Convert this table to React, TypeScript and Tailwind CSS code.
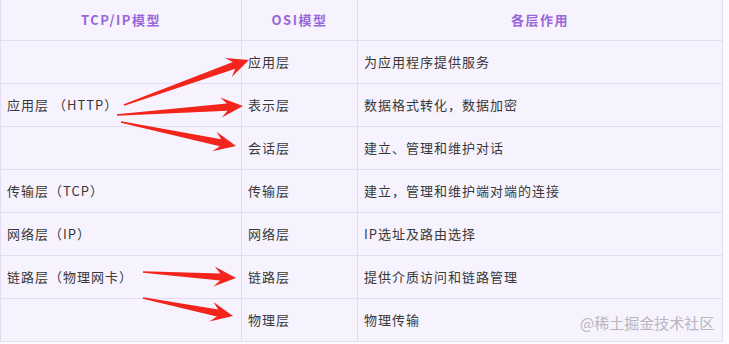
import React from "react";

const rows: [string, string, string][] = [
  ["", "应用层", "为应用程序提供服务"],
  ["应用层 （HTTP）", "表示层", "数据格式转化，数据加密"],
  ["", "会话层", "建立、管理和维护对话"],
  ["传输层（TCP）", "传输层", "建立，管理和维护端对端的连接"],
  ["网络层（IP）", "网络层", "IP选址及路由选择"],
  ["链路层（物理网卡）", "链路层", "提供介质访问和链路管理"],
  ["", "物理层", "物理传输"],
];

function arrow(tx: number, ty: number, px: number, py: number, L = 22, W = 10, sw = 3.6, tw = 0.8) {
  const dx = px - tx, dy = py - ty;
  const len = Math.hypot(dx, dy);
  const ux = dx / len, uy = dy / len;
  const nx = -uy, ny = ux;
  const bx = px - ux * L, by = py - uy * L;
  const ix = px - ux * (L * 0.72), iy = py - uy * (L * 0.72);
  const pts = [
    [tx + nx * tw, ty + ny * tw],
    [ix + nx * sw, iy + ny * sw],
    [bx + nx * W, by + ny * W],
    [px, py],
    [bx - nx * W, by - ny * W],
    [ix - nx * sw, iy - ny * sw],
    [tx - nx * tw, ty - ny * tw],
  ];
  return pts.map((p) => p.map((v) => v.toFixed(1)).join(",")).join(" ");
}

export default function App() {
  return (
    <div className="w-[729px] h-[344px] bg-[#fcfbfe] relative overflow-hidden" style={{ fontFamily: '"Noto Sans CJK SC", "Noto Sans", sans-serif' }}>
      <div className="w-[723px] border-l border-r border-[#e2ddf2] bg-[#f6f3fe]">
        <div className="grid grid-cols-[241px_116px_364px] h-[41px] border-b border-[#e2ddf2] text-[13px] font-bold text-[#9b66da] tracking-[1.5px]">
          <div className="flex items-center justify-center border-r border-[#e2ddf2]">TCP/IP模型</div>
          <div className="flex items-center justify-center border-r border-[#e2ddf2]">OSI模型</div>
          <div className="flex items-center justify-center">各层作用</div>
        </div>
        {rows.map((r, i) => (
          <div key={i} className="grid grid-cols-[241px_116px_364px] h-[43px] border-b border-[#e2ddf2] text-[13px] text-[#383838] tracking-[1px]">
            <div className="flex items-center pl-[6px] border-r border-[#e2ddf2]">{r[0]}</div>
            <div className="flex items-center pl-[6px] border-r border-[#e2ddf2]">{r[1]}</div>
            <div className="flex items-center pl-[6px]">{r[2]}</div>
          </div>
        ))}
      </div>
      <div className="absolute left-[580px] top-[312px] text-[15px] text-[#b8b5bf] whitespace-nowrap">@稀土掘金技术社区</div>
      <svg className="absolute left-0 top-0" width="729" height="344">
        <g fill="#f2241b">
          <polygon points={arrow(124, 105, 249, 60)} />
          <polygon points={arrow(117, 115, 243, 106)} />
          <polygon points={arrow(121, 122, 236, 146)} />
          <polygon points={arrow(143, 272, 236, 278)} />
          <polygon points={arrow(143, 298, 233, 316)} />
        </g>
      </svg>
    </div>
  );
}
